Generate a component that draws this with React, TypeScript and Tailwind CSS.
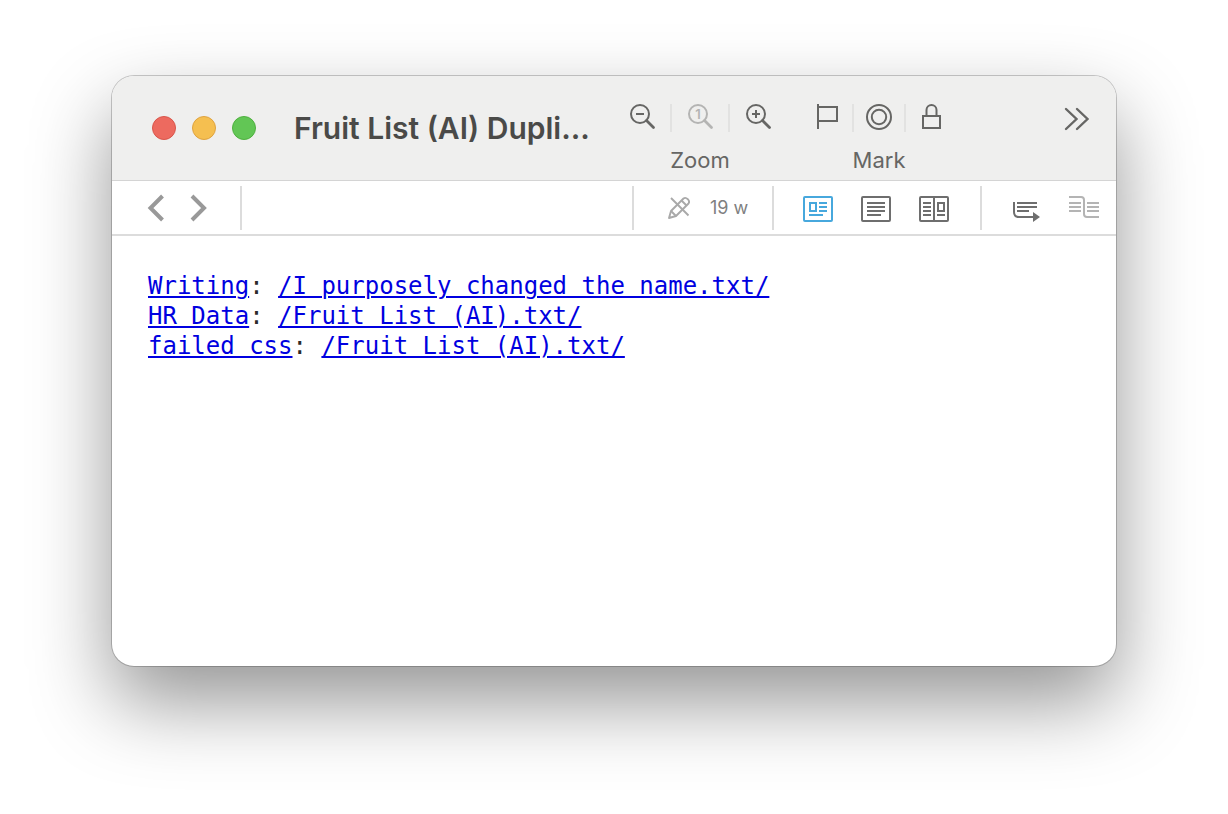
import type { ReactNode } from "react";

interface Entry {
    label: string;
    path: string;
}

interface ToolProps {
    label: string;
    className?: string;
    children: ReactNode;
}

const entries: Entry[] = [
    { label: "Writing", path: "/I purposely changed the name.txt/" },
    { label: "HR Data", path: "/Fruit List (AI).txt/" },
    { label: "failed css", path: "/Fruit List (AI).txt/" },
];

const linkClass = "text-[#0000e0] underline decoration-2 underline-offset-2";

function Tool({ label, className = "", children }: ToolProps) {
    return (
        <button type="button" aria-label={label} title={label} className={`flex shrink-0 items-center justify-center ${className}`}>
            {children}
        </button>
    );
}

function Divider() {
    return <div className="h-11 w-0.5 shrink-0 bg-[#dcdcdc]" />;
}

function ZoomIcon({ children }: { children: ReactNode }) {
    return (
        <svg width="28" height="28" viewBox="0 0 28 28" fill="none" stroke="currentColor" strokeWidth="2">
            <circle cx="12" cy="10" r="9" />
            <path d="M18.5 16.5L25.5 23.5" strokeWidth="2.8" strokeLinecap="round" />
            {children}
        </svg>
    );
}

function TitleBar() {
    return (
        <header className="flex h-[105px] items-start border-b border-[#d4d4d4] bg-[#efefee] pr-[25px] pl-10 text-[#666664]">
            <div className="flex h-[104px] shrink-0 items-center gap-4">
                <button type="button" aria-label="Close" className="size-6 rounded-full border border-[#d9564b] bg-[#ed6a5f]" />
                <button type="button" aria-label="Minimize" className="size-6 rounded-full border border-[#dfa340] bg-[#f5bf50]" />
                <button type="button" aria-label="Full screen" className="size-6 rounded-full border border-[#4fb03f] bg-[#62c655]" />
            </div>
            <h1 className="ml-[38px] w-80 truncate text-[30px] leading-[105px] font-semibold text-[#4a4a48]">
                Fruit List (AI) Dupli...
            </h1>
            <div className="flex shrink-0 flex-col items-center pt-7">
                <div className="flex divide-x-2 divide-[#e2e2e1]">
                    <Tool label="Zoom out" className="w-[58px]">
                        <ZoomIcon>
                            <path d="M8 10H16" />
                        </ZoomIcon>
                    </Tool>
                    <Tool label="Actual size" className="w-[58px] text-[#b4b4b3]">
                        <ZoomIcon>
                            <text x="12" y="14.5" fontSize="13" textAnchor="middle" fill="currentColor" stroke="none" fontWeight="600">1</text>
                        </ZoomIcon>
                    </Tool>
                    <Tool label="Zoom in" className="w-14">
                        <ZoomIcon>
                            <path d="M8 10H16M12 6V14" />
                        </ZoomIcon>
                    </Tool>
                </div>
                <span className="mt-3 text-[22px] leading-8">Zoom</span>
            </div>
            <div className="ml-4 flex shrink-0 flex-col items-center pt-7">
                <div className="flex divide-x-2 divide-[#e2e2e1]">
                    <Tool label="Flag" className="w-[52px]">
                        <svg width="28" height="28" viewBox="0 0 28 28" fill="none" stroke="currentColor" strokeWidth="2">
                            <path d="M5 0V25M5 3H24V17H5" />
                        </svg>
                    </Tool>
                    <Tool label="Label" className="w-[52px]">
                        <svg width="28" height="28" viewBox="0 0 28 28" fill="none" stroke="currentColor" strokeWidth="2">
                            <circle cx="14" cy="13" r="12" />
                            <circle cx="14" cy="13" r="7.2" />
                        </svg>
                    </Tool>
                    <Tool label="Lock" className="w-[50px]">
                        <svg width="28" height="28" viewBox="0 0 28 28" fill="none" stroke="currentColor" strokeWidth="2">
                            <path d="M6 12H23V24H6ZM9.5 12V6A5 5 0 0 1 19.5 6V12" />
                        </svg>
                    </Tool>
                </div>
                <span className="mt-3 text-[22px] leading-8">Mark</span>
            </div>
            <Tool label="More" className="mt-[29px] ml-auto">
                <svg width="28" height="28" viewBox="0 0 28 28" fill="none" stroke="currentColor" strokeWidth="2.4" strokeLinecap="round">
                    <path d="M3 4L13.5 14L3 24M14 4L24.5 14L14 24" />
                </svg>
            </Tool>
        </header>
    );
}

function NavBar() {
    return (
        <nav className="flex h-[55px] items-center border-b-2 border-[#dcdcdc] bg-white text-[#6e6e6e]">
            <div className="flex w-32 shrink-0 gap-3.5 pl-[30px] text-[#999999]">
                <Tool label="Back">
                    <svg width="28" height="28" viewBox="0 0 28 28" fill="none" stroke="currentColor" strokeWidth="4">
                        <path d="M20.5 2L8.5 14L20.5 26" />
                    </svg>
                </Tool>
                <Tool label="Forward">
                    <svg width="28" height="28" viewBox="0 0 28 28" fill="none" stroke="currentColor" strokeWidth="4">
                        <path d="M8 2L20 14L8 26" />
                    </svg>
                </Tool>
            </div>
            <Divider />
            <div className="flex-1" />
            <Divider />
            <div className="flex w-[138px] shrink-0 items-center gap-[19px] pl-[33px]">
                <Tool label="Editing disabled" className="text-[#a9a9a9]">
                    <svg width="24" height="24" viewBox="0 0 24 24" fill="none" stroke="currentColor" strokeWidth="1.9" strokeLinejoin="round">
                        <path d="M2 22L4 15L16.5 2.5Q18.5 1 20.8 3.2Q23 5.5 21.5 7.5L9 20Z" />
                        <path d="M4 15L9 20M14.5 4.5L19.5 9.5M4 2L21.5 19.5" />
                    </svg>
                </Tool>
                <span className="text-lg leading-6 text-[#808080]">19 w</span>
            </div>
            <Divider />
            <div className="flex w-[206px] shrink-0 gap-7 pt-0.5 pl-[29px]">
                <Tool label="Preview" className="text-[#47a8dd]">
                    <svg width="30" height="26" viewBox="0 0 30 26" fill="none" stroke="currentColor" strokeWidth="2">
                        <rect x="1" y="1" width="28" height="24" rx="1" />
                        <path d="M7 7H13V15H7ZM16 7H24M16 11H24M16 15H24M6 19H20" />
                    </svg>
                </Tool>
                <Tool label="Text">
                    <svg width="30" height="26" viewBox="0 0 30 26" fill="none" stroke="currentColor" strokeWidth="2">
                        <rect x="1" y="1" width="28" height="24" rx="1" />
                        <path d="M6 7H24M6 11H24M6 15H24M6 19H20" />
                    </svg>
                </Tool>
                <Tool label="Side by side">
                    <svg width="30" height="26" viewBox="0 0 30 26" fill="none" stroke="currentColor" strokeWidth="2">
                        <rect x="1" y="1" width="28" height="24" rx="1" />
                        <path d="M15 1V25M4 7H12M4 11H12M4 15H12M4 19H12M19 7H25V15H19ZM18 19H26" />
                    </svg>
                </Tool>
            </div>
            <Divider />
            <div className="flex shrink-0 gap-[29px] pt-0.5 pr-[17px] pl-[30px]">
                <Tool label="Wrap lines">
                    <svg width="28" height="26" viewBox="0 0 28 26" fill="none" stroke="currentColor" strokeWidth="2">
                        <path d="M2 6V16Q2 21 7 21H22M5 7H25M5 11H25M5 15H17" />
                        <path d="M21 16L28 21L21 26Z" fill="currentColor" stroke="none" />
                    </svg>
                </Tool>
                <Tool label="Synchronize scrolling" className="text-[#b4b4b4]">
                    <svg width="30" height="26" viewBox="0 0 30 26" fill="none" stroke="currentColor" strokeWidth="2">
                        <path d="M0 1H12Q15 1 15 4V18Q15 21 18 21H30M0 7H12M0 11H12M0 15H12M18 7H30M18 11H30M18 15H30" />
                    </svg>
                </Tool>
            </div>
        </nav>
    );
}

export default function App() {
    return (
        <div className="flex min-h-screen flex-col bg-white px-28 pt-[76px] pb-[148px] font-['Inter',sans-serif]">
            <div className="flex flex-1 flex-col overflow-hidden rounded-[22px] bg-white shadow-[0_0_0_1px_rgba(0,0,0,0.2),0_36px_80px_rgba(0,0,0,0.42)]">
                <TitleBar />
                <NavBar />
                <main className="flex-1 px-9 pt-[35px] font-['DejaVu_Sans_Mono',monospace] text-2xl leading-[30px] text-[#2a2a2a]">
                    {entries.map((entry) => (
                        <p key={entry.label}>
                            <a href="#" className={linkClass}>{entry.label}</a>
                            {": "}
                            <a href="#" className={linkClass}>{entry.path}</a>
                        </p>
                    ))}
                </main>
            </div>
        </div>
    );
}
